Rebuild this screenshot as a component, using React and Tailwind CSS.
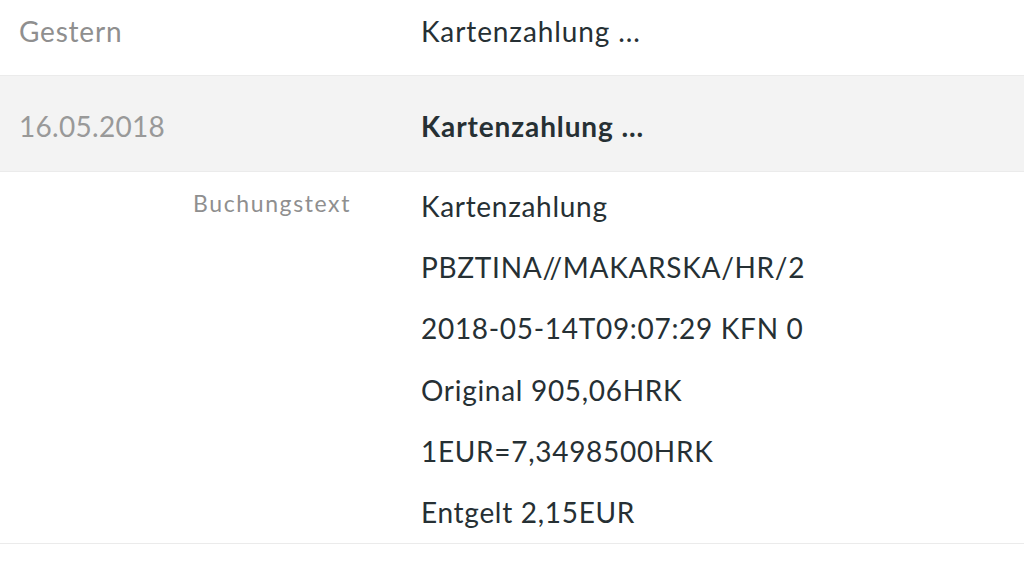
export default function App() {
  const lines = [
    "Kartenzahlung",
    "PBZTINA//MAKARSKA/HR/2",
    "2018-05-14T09:07:29 KFN 0",
    "Original 905,06HRK",
    "1EUR=7,3498500HRK",
    "Entgelt 2,15EUR",
  ];

  return (
    <div className="w-[1024px] h-[567px] overflow-hidden bg-white font-['Lato',sans-serif] text-[#263034]">
      {/* Gestern row */}
      <div className="flex items-center h-[76px] pb-[13px] border-b border-[#ebebeb]">
        <div className="w-[421px] pl-[19px] text-[28px] tracking-[0.8px] text-[#8f8f8f]">Gestern</div>
        <div className="text-[28px] tracking-[0.9px]">Kartenzahlung ...</div>
      </div>

      {/* selected row */}
      <div className="flex items-center h-[96px] pt-[4px] bg-[#f3f3f3] border-b border-[#ebebeb]">
        <div className="w-[421px] pl-[19px] text-[28px] tracking-[0.3px] text-[#999999]">16.05.2018</div>
        <div className="text-[28px] tracking-[0.9px] font-bold">Kartenzahlung ...</div>
      </div>

      {/* details */}
      <div className="flex h-[372px] pt-[3px] border-b border-[#ebebeb]">
        <div className="w-[421px] pr-[70px] pt-[13px] text-right text-[23px] leading-[30px] tracking-[1.6px] text-[#8f8f8f]">
          Buchungstext
        </div>
        <div className="flex flex-col">
          {lines.map((l) => (
            <div key={l} className="h-[61.8px] flex items-center text-[28px] tracking-[0.7px]">
              {l}
            </div>
          ))}
        </div>
      </div>

      {/* next row, cut off */}
      <div className="flex pt-[15px]">
        <div className="w-[421px] pr-[70px] text-right text-[23px] tracking-[1.6px] text-[#8f8f8f]">Empfänger</div>
        <div className="pl-[270px] text-[28px] tracking-[0.7px]">/</div>
      </div>
    </div>
  );
}
